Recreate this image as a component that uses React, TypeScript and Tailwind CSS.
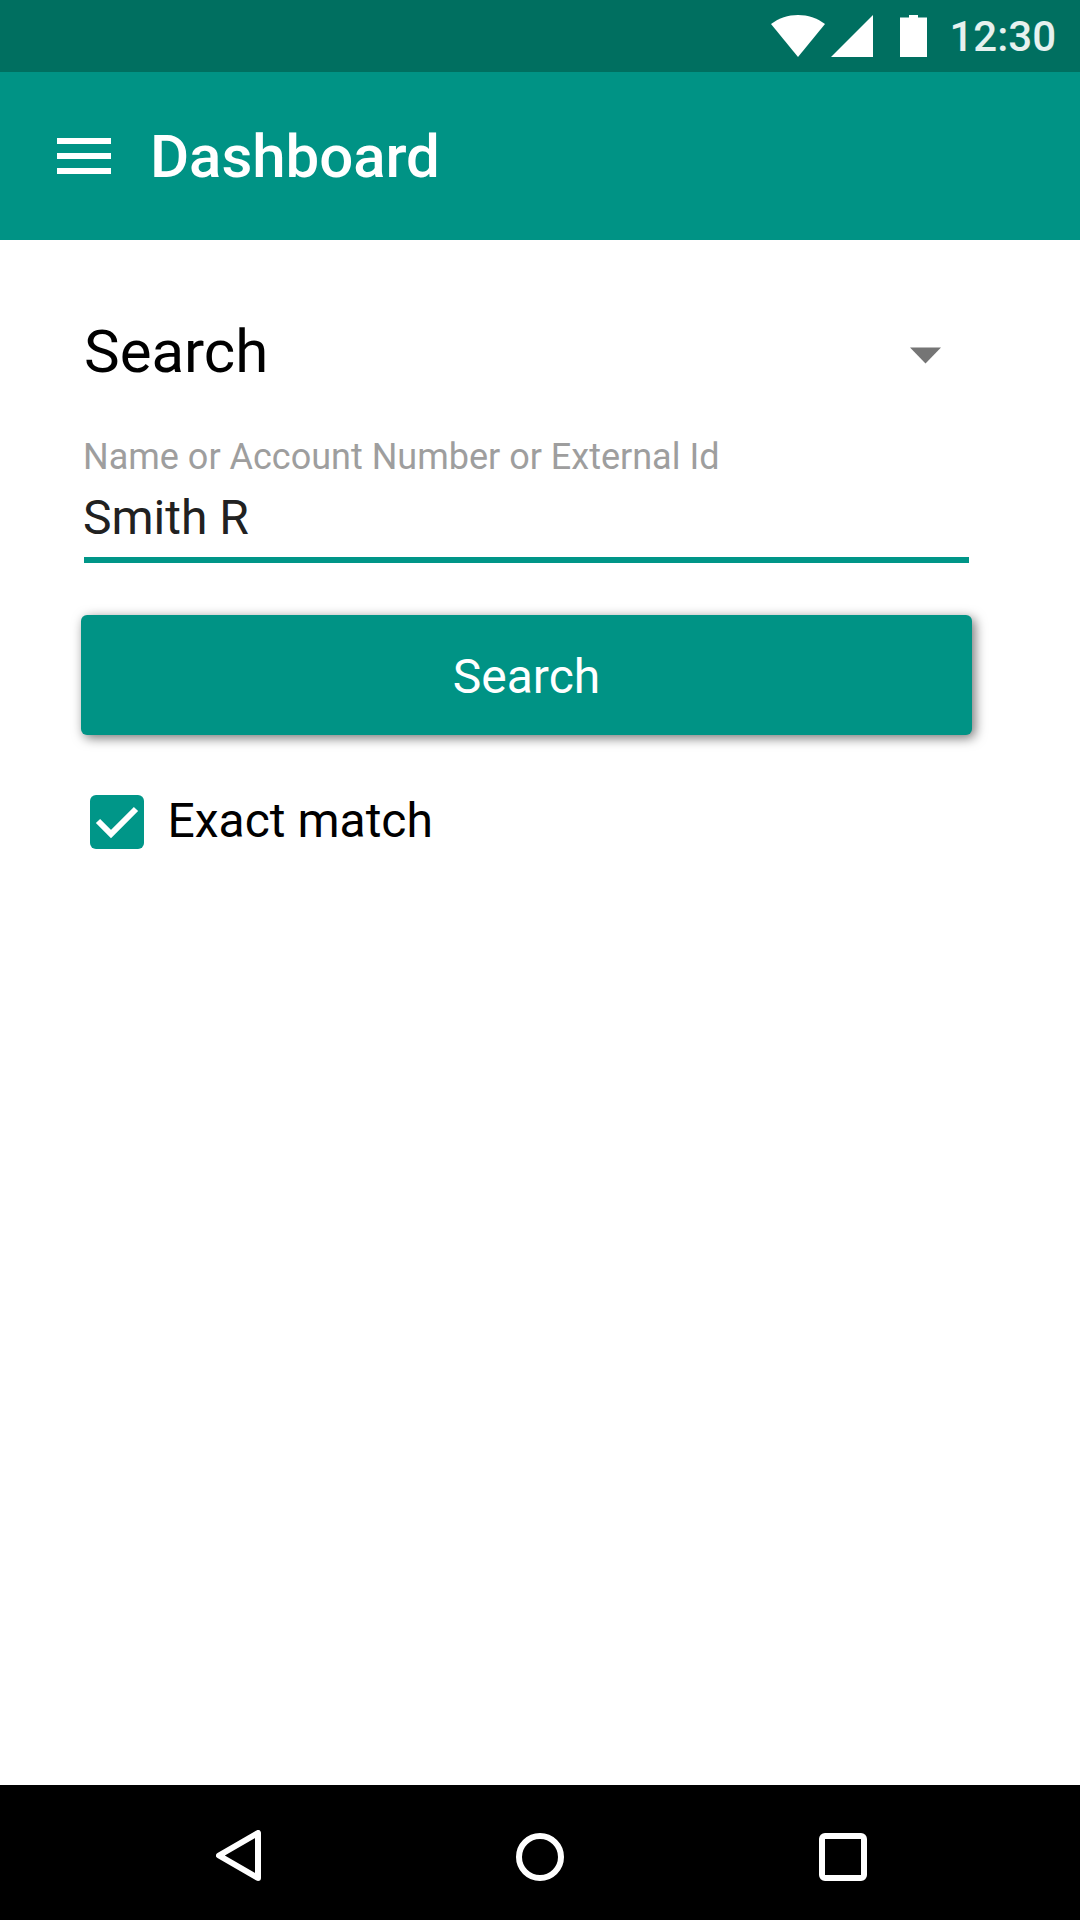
function StatusBar() {
  return (
    <div className="flex h-[72px] items-start justify-end bg-[#006f60] pr-[24px]">
      <svg className="mr-px h-[72px] w-[180px]" viewBox="768 0 180 72" fill="#fff">
        <path d="M771 24C779 18 788 15 798 15S817 18 825 24L798 57Z" />
        <path d="M831 57H873V15Z" />
        <path d="M909 15h9v2.4h9V57h-27V17.400h9Z" />
      </svg>
      <span className="mt-[12px] text-[42px] leading-[50px] font-medium text-white/90">12:30</span>
    </div>
  );
}

function AppBar() {
  return (
    <header className="flex h-[168px] items-start bg-[#009385] pl-[57px] text-white">
      <button className="mt-[66px] flex w-[54px] flex-col gap-[9px]" aria-label="Menu">
        <span className="h-[6px] w-full bg-white" />
        <span className="h-[6px] w-full bg-white" />
        <span className="h-[6px] w-full bg-white" />
      </button>
      <h1 className="mt-[49px] ml-[39px] text-[60px] leading-[72px] font-medium tracking-[-0.05px]">Dashboard</h1>
    </header>
  );
}

function NavBar() {
  return (
    <nav className="flex h-[135px] items-start justify-between bg-black pr-[213px] pl-[216px]">
      <svg className="mt-[45px] h-[51px] w-[45px]" viewBox="0 0 45 51" fill="none" stroke="#fff" strokeWidth="6" strokeLinejoin="round">
        <path d="M42 3V48L3 25.500Z" />
      </svg>
      <span className="mt-[48px] h-[48px] w-[48px] rounded-full border-[6px] border-white" />
      <span className="mt-[48px] h-[48px] w-[48px] rounded-[6px] border-[6px] border-white" />
    </nav>
  );
}

export default function App() {
  return (
    <div className="flex h-[1920px] w-[1080px] flex-col bg-white font-['Roboto',sans-serif]">
      <StatusBar />
      <AppBar />
      <main className="flex flex-1 flex-col items-start pt-[76px] pl-[81px]">
        <div className="flex w-[860px] items-start justify-between pl-[3px] text-black">
          <span className="text-[60px] leading-[72px]">Search</span>
          <svg className="mt-[31px] h-[17px] w-[31px]" viewBox="0 0 31 17" fill="#757575">
            <path d="M0 .5H31L15.500 16.500Z" />
          </svg>
        </div>
        <label className="mt-[48px] ml-[2px] text-[36px] leading-[42px] text-[#9e9e9e]">
          Name or Account Number or External Id
        </label>
        <div className="mt-[12px] ml-[2px] text-[48px] leading-[56px] text-[#212121]">Smith R</div>
        <div className="mt-[11px] ml-[3px] h-[6px] w-[885px] bg-[#009688]" />
        <button className="mt-[52px] flex h-[120px] w-[891px] items-center justify-center rounded-[6px] bg-[#009385] pt-[4px] text-[48px] leading-[56px] text-white shadow-[3px_3px_12px_rgba(0,0,0,0.55)]">
          Search
        </button>
        <div className="mt-[60px] ml-[9px] flex items-start">
          <svg className="h-[54px] w-[54px]" viewBox="0 0 54 54">
            <rect width="54" height="54" rx="6" fill="#009688" />
            <path d="M8 26L21 39L46 14" fill="none" stroke="#fff" strokeWidth="6" />
          </svg>
          <span className="mt-[-2px] ml-[23.5px] text-[48px] leading-[56px] text-black">Exact match</span>
        </div>
      </main>
      <NavBar />
    </div>
  );
}
